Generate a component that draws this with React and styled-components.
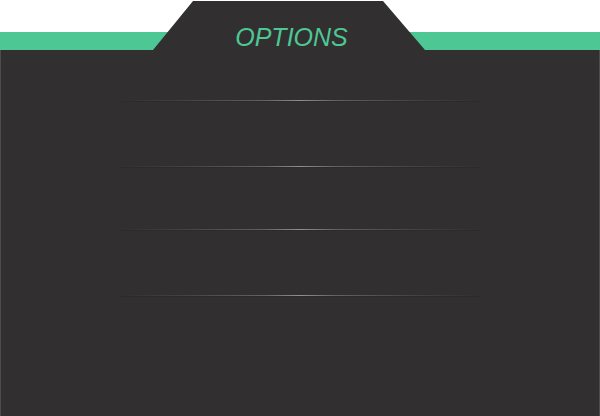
import React from "react";
import styled, { createGlobalStyle } from "styled-components";

const Global = createGlobalStyle`
  html, body { margin: 0; padding: 0; background: #ffffff; }
  body { font-family: "Liberation Sans", Arial, sans-serif; }
`;

const Page = styled.div`
  width: 600px;
  height: 416px;
  display: flex;
  flex-direction: column;
  overflow: hidden;
`;

const Header = styled.header`
  height: 50px;
  flex: none;
  display: flex;
  align-items: flex-end;
  background: linear-gradient(to bottom, #ffffff 0, #ffffff 32px, #4dc794 32px, #4dc794 100%);
`;

const Tab = styled.div`
  margin-left: 153px;
  width: 272px;
  height: 49px;
  box-sizing: border-box;
  background: #312f30;
  clip-path: polygon(40px 0, 230px 0, 272px 100%, 0 100%);
  display: flex;
  justify-content: center;
  padding: 24px 0 0 5px;
`;

const Title = styled.h1`
  margin: 0;
  font-family: "Liberation Sans", Arial, sans-serif;
  font-style: italic;
  font-weight: 400;
  font-size: 25px;
  line-height: 25px;
  color: #4dc794;
  letter-spacing: 0;
`;

const Body = styled.main`
  flex: 1;
  background: #312f30;
  border-left: 1px solid #4d4b4c;
  border-right: 1px solid #4d4b4c;
  display: flex;
  flex-direction: column;
`;

const Row = styled.div`
  height: ${(p) => p.$h}px;
  flex: none;
`;

const Divider = styled.div`
  height: 1px;
  width: 360px;
  margin: 0 auto;
  flex: none;
  background: linear-gradient(
    to right,
    rgba(120, 118, 119, 0) 0%,
    rgba(110, 108, 109, 0.35) 20%,
    rgba(120, 118, 119, 0.7) 40%,
    rgba(145, 143, 144, 1) 50%,
    rgba(120, 118, 119, 0.7) 60%,
    rgba(110, 108, 109, 0.35) 80%,
    rgba(120, 118, 119, 0) 100%
  );
  box-shadow: 0 1px 0 rgba(0, 0, 0, 0.1);
`;

const rows = [50, 65, 62, 65];

export default function App() {
  return (
    <>
      <Global />
      <Page>
        <Header>
          <Tab>
            <Title>OPTIONS</Title>
          </Tab>
        </Header>
        <Body>
          {rows.map((h, i) => (
            <React.Fragment key={i}>
              <Row $h={h} />
              <Divider />
            </React.Fragment>
          ))}
        </Body>
      </Page>
    </>
  );
}
